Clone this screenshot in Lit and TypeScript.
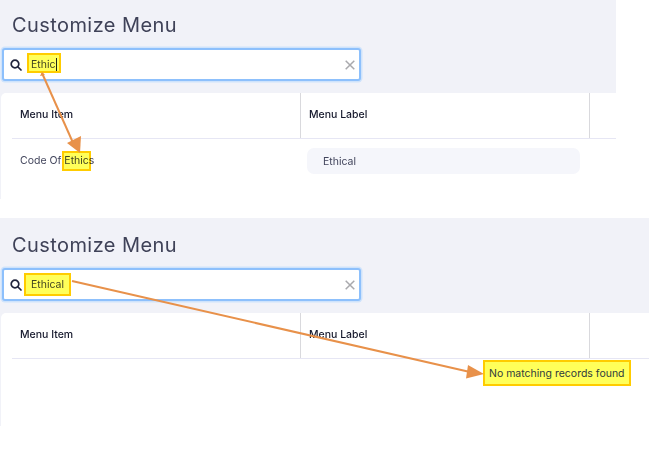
import { LitElement, html, css, svg } from "lit";
import { customElement, property } from "lit/decorators.js";

const searchIcon = html`<svg class="search-icon" width="12" height="12" viewBox="0 0 12 12" fill="none" stroke="#20243c" stroke-width="1.7" stroke-linecap="round"><circle cx="5" cy="5" r="3.8"/><path d="M8 8 11 11"/></svg>`;
const clearIcon = html`<svg class="clear-icon" width="10" height="10" viewBox="0 0 10 10" fill="none" stroke="#a9a9ad" stroke-width="1.5"><path d="M.7.7 9.300 9.300M9.300.7.7 9.300"/></svg>`;

@customElement("menu-panel")
class MenuPanel extends LitElement {
  @property() query = "";
  @property({ type: Boolean }) caret = false;
  @property({ type: Boolean }) hasRow = false;

  static styles = css`
    :host { display: block; background: #f1f2f8; font-family: Inter, "Noto Sans", sans-serif; color: #42455c; }
    :host(.second) .head { height: 95px; padding-top: 15px; }
    :host(.second) .card { height: 113px; }
    .head { height: 93px; display: flex; flex-direction: column; box-sizing: border-box; padding: 13px 0 0 1.5px; }
    h1 { margin: 0 0 0 10.5px; font-size: 20px; line-height: 25px; font-weight: 400; color: #3f4258; letter-spacing: 0.42px; height: 35px; }
    .search { width: 359px; height: 33px; box-sizing: border-box; background: #fff; border: 2px solid #8dc0fc; border-radius: 3px; box-shadow: 0 0 0 1.5px #cfe3fb; display: flex; align-items: center; padding: 0 3.500px 0 6.500px; font-size: 10.5px; }
    .q { margin-left: 9px; flex: 1; display: flex; align-items: center; color: #42455c; }
    .cursor { width: 1px; height: 13px; background: #20243c; }
    .card { background: #fff; border-radius: 5px 0 0 0; margin-left: 1px; height: 106px; font-size: 10.5px; }
    .cols, .row { display: grid; grid-template-columns: 289px 289px 1fr; margin-left: 11px; }
    .cols { height: 45px; border-bottom: 1px solid #e6e6f4; align-items: center; font-weight: 500; color: #14172b; }
    .cols > div { height: 100%; display: flex; align-items: center; padding: 0 0 3px 8px; border-right: 1px solid #d9d9dd; box-sizing: border-box; }
    .cols > div:last-child { border-right: none; }
    .row { margin-top: 9px; align-items: center; height: 26px; }
    .row .item { padding-left: 8px; margin-top: -2px; }
    .label { margin-left: 6px; width: 273px; height: 26px; box-sizing: border-box; padding-left: 16px; background: #f5f6fb; border-radius: 7px; display: flex; align-items: center; }
  `;

  render() {
    return html`
      <div class="head">
        <h1>Customize Menu</h1>
        <div class="search">
          ${searchIcon}
          <span class="q">${this.query}${this.caret ? html`<span class="cursor"></span>` : ""}</span>
          ${clearIcon}
        </div>
      </div>
      <div class="card">
        <div class="cols"><div>Menu Item</div><div>Menu Label</div><div></div></div>
        ${this.hasRow
          ? html`<div class="row"><div class="item">Code Of Ethics</div><div class="label">Ethical</div></div>`
          : ""}
      </div>`;
  }
}

@customElement("app-root")
class AppRoot extends LitElement {
  static styles = css`
    :host { display: block; position: relative; width: 657px; height: 466px; background: #fff; font-family: Inter, "Noto Sans", sans-serif; overflow: hidden; }
    .stack { display: flex; flex-direction: column; gap: 19px; }
    .first { width: 616px; }
    .second { width: 649px; }
    .arrows { position: absolute; inset: 0; pointer-events: none; }
    .mark { position: absolute; box-sizing: border-box; background: #ffff5a; border: 2px solid #ffcc00; mix-blend-mode: multiply; }
    .note { position: absolute; left: 483px; top: 360px; width: 148px; height: 26px; box-sizing: border-box; background: #ffff5a; border: 2px solid #ffcc00; font-size: 10.5px; color: #2f3a3c; display: flex; align-items: center; padding-left: 4px; white-space: nowrap; }
    .m1 { left: 27px; top: 53px; width: 34px; height: 20px; }
    .m2 { left: 62px; top: 151px; width: 29px; height: 20px; }
    .m3 { left: 24px; top: 273px; width: 47px; height: 23px; }
  `;

  render() {
    return html`
      <div class="stack">
        <menu-panel class="first" query="Ethic" caret hasRow></menu-panel>
        <menu-panel class="second" query="Ethical"></menu-panel>
      </div>
      <div class="mark m1"></div>
      <div class="mark m2"></div>
      <div class="mark m3"></div>
      <div class="note">No matching records found</div>
      <svg class="arrows" viewBox="0 0 657 466">
        ${svg`
          <path d="M42 73 74 145" stroke="#e8914a" stroke-width="2" fill="none"/>
          <path d="M42 72 40 76 45 75Z" fill="#e8914a"/>
          <path d="M80 153 67 143 81 136Z" fill="#e8914a"/>
          <path d="M72 281 470 372" stroke="#e8914a" stroke-width="2" fill="none"/>
          <path d="M484 374 466 378.500 468 365Z" fill="#e8914a"/>
        `}
      </svg>`;
  }
}
